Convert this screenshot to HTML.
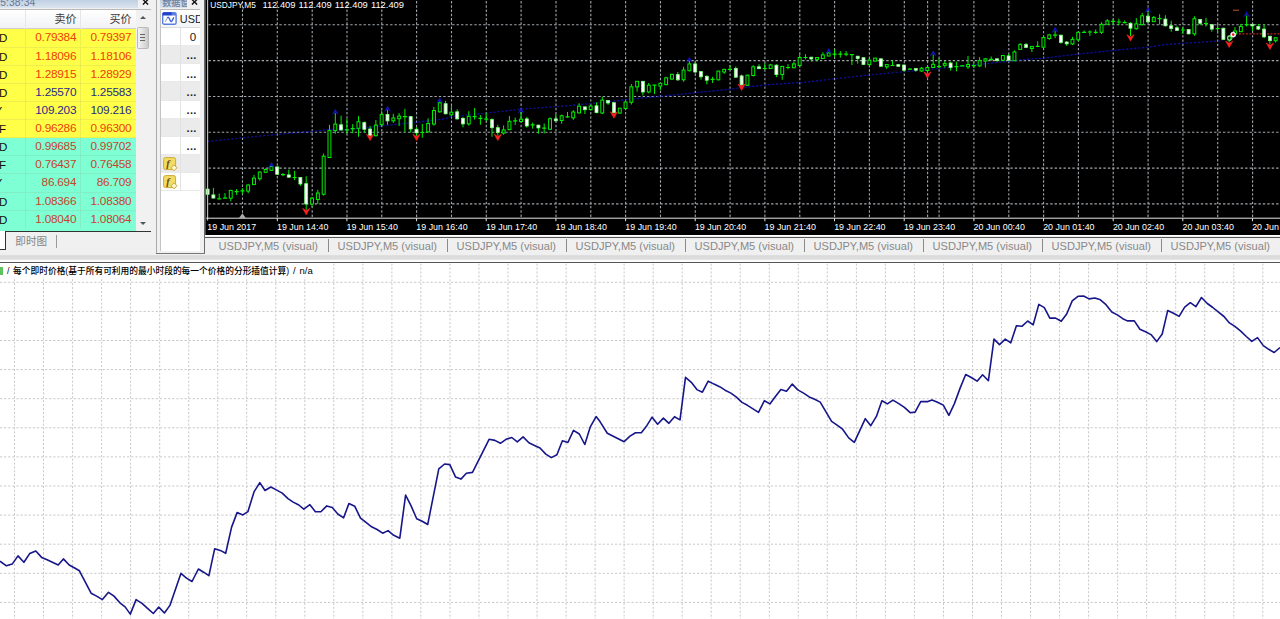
<!DOCTYPE html>
<html><head><meta charset="utf-8"><title>MT4</title>
<style>
html,body{margin:0;padding:0}
body{width:1280px;height:619px;overflow:hidden;position:relative;background:#fff;font-family:"Liberation Sans","Noto Sans CJK SC",sans-serif}
svg{position:absolute;display:block}
.ax{font-family:"Liberation Sans",sans-serif;font-size:8.9px;fill:#fff;white-space:pre}
.abs{position:absolute}
/* left area */
#left{position:absolute;left:0;top:0;width:205.5px;height:254px;background:#f0f0f0}
#mwh{position:absolute;left:0;top:0;width:138px;height:8.2px;background:linear-gradient(#bfcfe3,#dbe4ee);overflow:hidden}
#mwh span{position:absolute;left:-5.6px;top:-3.1px;font-size:10.3px;line-height:12px;color:#68778e;letter-spacing:.1px}
.x{position:absolute;top:-4.6px;font-size:12px;line-height:14px;color:#111;font-family:"DejaVu Sans",sans-serif;font-weight:bold}
#mwt{position:absolute;left:0;top:8.7px;width:150.5px;height:222.3px;background:#f1f1f1;overflow:hidden;border-top:1px solid #b9b9b9;box-sizing:border-box}
#mhd{position:absolute;left:0;top:0;width:135.5px;height:19.6px;background:linear-gradient(#fff,#f1f2f5);border-bottom:1px solid #cfcfcf;box-sizing:border-box}
#mhd span{position:absolute;top:3.4px;font-size:11px;color:#3a3a3a;font-family:"Liberation Sans","Noto Sans CJK SC",sans-serif;line-height:13px}
#mhd i{position:absolute;top:0;width:1px;height:21px;background:#e4e6ea}
.mr{position:absolute;left:0;width:135.5px;height:18.2px;font-size:11.8px;letter-spacing:-.25px;line-height:17.6px;box-sizing:border-box;border-bottom:1px solid rgba(150,150,120,.16)}
.mr.y{background:#ffff48}
.mr.g{background:#7fffd4}
.mr.r{color:#f0400a}
.mr.b{color:#2a2a86}
.mr.t{color:#c8432e}
.mr span{position:absolute;top:0}
.mr .sy{color:#111;font-size:11.6px;letter-spacing:0}
.mr .n1{right:59.3px}
.mr .n2{right:4.1px}
.mr:before,.mr:after{content:"";position:absolute;top:0;width:1px;height:18px;background:rgba(150,150,120,.16)}
.mr:before{left:24.5px}
.mr:after{left:79.5px}
#sb{position:absolute;left:136.5px;top:27.2px;width:12.6px;height:21.6px;border:1px solid #b9b9b9;border-radius:1.5px;background:linear-gradient(90deg,#f4f4f4,#dcdcdc 60%,#c9c9c9);box-sizing:border-box}
#sb i{position:absolute;left:2.6px;width:5.4px;height:1px;background:#666}
.arr{position:absolute;width:0;height:0;border-left:3px solid transparent;border-right:3px solid transparent}
#tabs1{position:absolute;left:0;top:231px;width:150.5px;height:23px}
#tabs1 .ln{position:absolute;left:5px;top:0;width:145.5px;height:1px;background:#333}
#tabs1 .act{position:absolute;left:0;top:0;width:5px;height:18px;background:#fff;border-right:1px solid #333;border-bottom:1px solid #333}
#tabs1 .t{position:absolute;left:15.3px;top:2.6px;font-size:10.6px;line-height:14px;color:#858585;font-family:"Liberation Sans","Noto Sans CJK SC",sans-serif}
#tabs1 .s{position:absolute;left:56.2px;top:3.5px;width:1px;height:13px;background:#9a9a9a}
#vl{position:absolute;left:155.6px;top:0;width:1px;height:254px;background:#a9a9a9}
/* data window */
#dwh{position:absolute;left:160.4px;top:0;width:26.4px;height:8.2px;background:linear-gradient(#bfcfe3,#dbe4ee);overflow:hidden}
#dwh span{position:absolute;left:1.8px;top:-3.4px;font-size:9.1px;line-height:12px;color:#6f7f9a;font-weight:500;font-family:"Liberation Sans","Noto Sans CJK SC",sans-serif;white-space:nowrap}
#dw{position:absolute;left:160.4px;top:8.7px;width:39.8px;height:242.6px;background:#fff;border-left:1px solid #c4c4c4;border-top:1px solid #b9b9b9;box-sizing:border-box;overflow:hidden}
#dw .h{position:absolute;left:0;top:0;width:40px;height:19.3px;background:linear-gradient(#fff,#f3f4f6);border-bottom:1px solid #dcdcdc;box-sizing:border-box}
#dw .h span{position:absolute;left:18.4px;top:3.3px;font-size:10.9px;line-height:14px;color:#222;white-space:nowrap}
.dr{position:absolute;left:0;width:40px;height:18.2px;box-sizing:border-box;border-bottom:1px solid #e9e9e9;background:#fff}
.dr.alt{background:#ebebeb}
.dr:after{content:"";position:absolute;left:19px;top:0;width:1px;height:18px;background:#e3e3e3}
.dv{position:absolute;right:5.2px;top:2.2px;font-size:11.6px;line-height:14px;color:#222}
.dv.dots{font-weight:bold;letter-spacing:.4px;top:2.4px;right:4.6px;font-size:11px}
.fi{left:2px;top:2.2px}
#dwrap{position:absolute;left:0;top:-9.7px}
/* chart tabs */
#ctabs{position:absolute;left:205.3px;top:235px;width:1074.5px;height:18.5px;background:#f0f0f0;border-top:1px solid #fff}
#ctl{position:absolute;left:205.3px;top:237px;width:1074.7px;height:1px;background:#555}
.tb{position:absolute;top:238.9px;font-size:11.08px;line-height:14px;color:#888;width:119px;text-align:center;white-space:nowrap}
.ts{position:absolute;top:239.4px;width:1.2px;height:13px;background:#8a8a8a}
#cl{position:absolute;left:204.2px;top:0;width:1.1px;height:254px;background:#6a6a6a}
#bl{position:absolute;left:155.6px;top:253.2px;width:49.6px;height:1px;background:#777}
/* splitter */
#sp{position:absolute;left:0;top:254px;width:1280px;height:9px;background:linear-gradient(#efefef 0,#efefef 12%,#dadada 18%,#dedede 60%,#fcfcfc 66%,#fcfcfc 88%,#555 90%,#555 100%)}
#hd{position:absolute;left:0;padding:1.2px 5.5px 0.4px 7px;background:#fff;top:263.4px;font-size:8.72px;line-height:12px;color:#000;font-weight:500;word-spacing:1.2px;white-space:pre;font-family:"Liberation Sans","Noto Sans CJK SC",sans-serif}
#gr{position:absolute;left:0;top:266.6px;width:2.8px;height:8px;background:#5fc15f;z-index:3}
</style></head><body>
<div id="left">
 <div id="mwh"><span>15:38:34</span></div>
 <svg width="7" height="6" viewBox="0 0 7 6" style="left:142.0px;top:-1px"><path d="M0.9 0.4L6.1 5.6M6.1 0.4L0.9 5.6" stroke="#111" stroke-width="1.35" fill="none"/></svg>
 <div id="mwt">
  <div id="mhd"><span style="left:54.6px">卖价</span><span style="left:109.4px">买价</span><i style="left:24.5px"></i><i style="left:79.5px"></i></div>
 </div>
 <div class="mr y r" style="top:29.4px"><span class="sy" style="right:128.1px">AUDUSD</span><span class="n1">0.79384</span><span class="n2">0.79397</span></div><div class="mr y r" style="top:47.53px"><span class="sy" style="right:128.1px">EURUSD</span><span class="n1">1.18096</span><span class="n2">1.18106</span></div><div class="mr y r" style="top:65.66px"><span class="sy" style="right:128.1px">GBPUSD</span><span class="n1">1.28915</span><span class="n2">1.28929</span></div><div class="mr y b" style="top:83.79px"><span class="sy" style="right:128.1px">USDCAD</span><span class="n1">1.25570</span><span class="n2">1.25583</span></div><div class="mr y b" style="top:101.92px"><span class="sy" style="right:133.2px">USDJPY</span><span class="n1">109.203</span><span class="n2">109.216</span></div><div class="mr y r" style="top:120.05px"><span class="sy" style="right:129.5px">USDCHF</span><span class="n1">0.96286</span><span class="n2">0.96300</span></div><div class="mr g t" style="top:138.18px"><span class="sy" style="right:128.1px">AUDCAD</span><span class="n1">0.99685</span><span class="n2">0.99702</span></div><div class="mr g t" style="top:156.31px"><span class="sy" style="right:129.5px">AUDCHF</span><span class="n1">0.76437</span><span class="n2">0.76458</span></div><div class="mr g t" style="top:174.44px"><span class="sy" style="right:133.2px">AUDJPY</span><span class="n1">86.694</span><span class="n2">86.709</span></div><div class="mr g t" style="top:192.57px"><span class="sy" style="right:128.1px">AUDNZD</span><span class="n1">1.08366</span><span class="n2">1.08380</span></div><div class="mr g t" style="top:210.7px"><span class="sy" style="right:128.1px">AUDSGD</span><span class="n1">1.08040</span><span class="n2">1.08064</span></div>
 <div class="abs" style="left:0;top:228px;width:135.5px;height:3px;background:#7fffd4"></div>
 <div class="arr" style="left:140px;top:15.6px;border-bottom:3.4px solid #555"></div>
 <div class="arr" style="left:139.6px;top:221.6px;border-top:3.4px solid #555"></div>
 <div id="sb"><i style="top:6.3px"></i><i style="top:9.2px"></i><i style="top:12.1px"></i></div>
 <div id="tabs1"><div class="ln"></div><div class="act"></div><span class="t">即时图</span><i class="s"></i></div>
 <div id="vl"></div>
 <div id="dwh"><span>数据窗口</span></div>
 <svg width="7" height="6" viewBox="0 0 7 6" style="left:190.9px;top:-1px"><path d="M0.9 0.4L6.1 5.6M6.1 0.4L0.9 5.6" stroke="#111" stroke-width="1.35" fill="none"/></svg>
 <div id="dw"><div id="dwrap">
  <div class="h" style="top:8.7px"><svg width="16" height="14" viewBox="0 0 16 14" style="left:0.9px;top:3px"><rect x="0.7" y="0.7" width="13.4" height="11.6" rx="1.6" fill="#fff" stroke="#5a7ee0" stroke-width="1.4"/><path d="M0.7 3.4V2.2Q0.7 0.7 2.2 0.7H12.6Q14.1 0.7 14.1 2.2V3.4Z" fill="#5a7ee0"/><path d="M0.4 3.2V2Q0.4 0.2 2.2 0.2H9.6V3.2Z" fill="#1f44c8"/><path d="M3.2 9.8L5.6 5.6" fill="none" stroke="#a9b6d4" stroke-width="1.3"/><path d="M5.4 5.9Q6.4 4.6 7.2 6.2L8.4 9Q9.2 10.4 10 8.8L11.9 5.4" fill="none" stroke="#3a62d6" stroke-width="1.4"/></svg><span>USDJPY,M5</span></div>
  <div class="dr" style="top:28.0px"><span class="dv">0</span></div><div class="dr alt" style="top:46.1px"><span class="dv dots">...</span></div><div class="dr" style="top:64.3px"><span class="dv dots">...</span></div><div class="dr alt" style="top:82.4px"><span class="dv dots">...</span></div><div class="dr" style="top:100.6px"><span class="dv dots">...</span></div><div class="dr alt" style="top:118.8px"><span class="dv dots">...</span></div><div class="dr" style="top:136.9px"><span class="dv dots">...</span></div><div class="dr alt" style="top:155.0px"><svg class="fi" width="15" height="14" viewBox="0 0 15 14"><rect x="0.6" y="0.6" width="12" height="12" rx="2" fill="#f3dc63" stroke="#c9a93a" stroke-width="1"/><text x="3.2" y="10" font-family="Liberation Serif, serif" font-style="italic" font-weight="bold" font-size="10.5" fill="#6b4a12">f</text><path d="M11 7.8L14 10.8L11 13.8L8 10.8Z" fill="#fff7c8" stroke="#c9a93a" stroke-width="1"/></svg></div><div class="dr" style="top:173.2px"><svg class="fi" width="15" height="14" viewBox="0 0 15 14"><rect x="0.6" y="0.6" width="12" height="12" rx="2" fill="#f3dc63" stroke="#c9a93a" stroke-width="1"/><text x="3.2" y="10" font-family="Liberation Serif, serif" font-style="italic" font-weight="bold" font-size="10.5" fill="#6b4a12">f</text><path d="M11 7.8L14 10.8L11 13.8L8 10.8Z" fill="#fff7c8" stroke="#c9a93a" stroke-width="1"/></svg></div>
 </div></div>
 <div id="cl"></div><div id="bl"></div>
</div>
<svg class="chart" width="1075" height="235" viewBox="205 0 1075 235" style="left:205px;top:0"><rect x="205.3" y="0" width="1074.7" height="235" fill="#000"/><path d="M242.5 1V218.2 M277.3 1V218.2 M312.2 1V218.2 M347.0 1V218.2 M381.8 1V218.2 M416.6 1V218.2 M451.5 1V218.2 M486.3 1V218.2 M521.1 1V218.2 M556.0 1V218.2 M590.8 1V218.2 M625.6 1V218.2 M660.5 1V218.2 M695.3 1V218.2 M730.1 1V218.2 M764.9 1V218.2 M799.8 1V218.2 M834.6 1V218.2 M869.4 1V218.2 M904.3 1V218.2 M939.1 1V218.2 M973.9 1V218.2 M1008.8 1V218.2 M1043.6 1V218.2 M1078.4 1V218.2 M1113.2 1V218.2 M1148.1 1V218.2 M1182.9 1V218.2 M1217.7 1V218.2 M1252.6 1V218.2 M927.6 1V218.2" stroke="#a0a6ac" stroke-width="1.1" stroke-dasharray="2.4 1.87" fill="none"/><path d="M208.5 24.8H1280 M208.5 60.6H1280 M208.5 96.5H1280 M208.5 132.3H1280 M208.5 168.1H1280 M208.5 203.9H1280" stroke="#a0a6ac" stroke-width="1.1" stroke-dasharray="2.4 2.03" fill="none"/><polyline points="207.3,141.5 242.2,137.8 277.1,134.4 312.3,131.5 328.0,129.5 347.3,129.9 381.8,126.0 416.7,122.2 445.0,118.9 451.4,116.6 486.7,113.1 521.2,109.2 565.0,106.0 590.5,103.6 625.4,99.8 660.6,96.3 685.0,93.9 695.3,92.7 730.2,89.2 765.1,84.9 805.0,82.3 834.4,78.8 869.3,74.9 904.5,71.7 922.8,70.1 953.8,66.9 992.5,63.0 1031.3,58.8 1043.7,58.4 1044.2,58.1 1078.6,54.0 1113.4,50.4 1148.3,47.2 1165.0,44.6 1183.0,43.3 1217.8,41.1 1222.4,40.6" stroke="#1212c4" stroke-width="1.35" stroke-dasharray="2.3 1.7" fill="none" opacity="0.75"/><path d="M1239 33.9H1280" stroke="#e03020" stroke-width="1" stroke-dasharray="2 1.5" fill="none"/><path d="M1233 10.2H1239" stroke="#c05028" stroke-width="1" fill="none"/><path d="M207.6 189.1V194.3 M213.4 187.8V198.2 M219.2 193.6V198.8 M225.0 193.0V198.2 M230.8 189.8V201.4 M236.6 189.1V194.9 M242.4 188.1V194.3 M248.2 184.3V193.2 M254.0 174.9V185.0 M259.8 171.4V180.7 M265.6 168.4V172.6 M271.4 166.2V170.6 M277.2 166.9V174.6 M283.0 173.0V176.2 M288.8 169.7V177.5 M294.6 170.8V180.1 M300.4 177.2V185.9 M306.2 176.2V209.8 M312.0 196.9V207.2 M317.8 189.8V204.0 M323.6 153.6V195.6 M329.5 124.8V157.7 M335.3 113.1V133.8 M341.1 115.7V130.6 M346.9 118.9V133.8 M352.7 124.1V133.2 M358.5 116.1V136.8 M364.3 121.5V132.5 M370.1 126.0V135.7 M375.9 120.0V136.4 M381.7 110.5V126.7 M387.5 109.9V124.8 M393.3 113.8V122.8 M399.1 113.1V126.0 M404.9 108.9V131.9 M410.7 116.1V132.5 M416.5 127.3V135.7 M422.3 123.8V137.7 M428.1 118.3V132.5 M433.9 107.0V125.7 M439.8 101.5V112.7 M445.6 100.8V114.4 M451.4 105.4V116.6 M457.2 109.2V119.6 M463.0 117.0V127.3 M468.8 111.2V125.7 M474.6 108.0V119.6 M480.4 115.1V124.8 M486.2 112.5V121.5 M492.0 118.3V136.8 M497.8 124.8V135.7 M503.6 125.4V134.7 M509.4 116.1V130.3 M515.2 117.6V124.8 M521.0 111.8V121.8 M526.8 117.0V127.7 M532.6 122.6V128.6 M538.4 124.8V133.8 M544.2 123.5V133.4 M550.0 117.4V129.9 M555.8 114.0V121.5 M561.7 114.6V123.7 M567.5 112.0V117.8 M573.3 110.1V119.8 M579.1 103.2V113.6 M584.9 106.6V114.0 M590.7 104.9V110.7 M596.5 102.3V113.3 M602.3 96.8V114.0 M608.1 100.1V104.9 M613.9 102.3V113.3 M619.7 107.9V113.6 M625.5 101.0V109.4 M631.3 83.9V104.5 M637.1 81.0V91.6 M642.9 81.0V95.5 M648.7 83.0V93.3 M654.5 84.9V93.9 M660.3 83.0V90.1 M666.1 76.9V85.2 M672.0 73.9V79.7 M677.8 72.0V81.0 M683.6 66.8V81.7 M689.4 61.0V71.4 M695.2 61.7V73.3 M701.0 71.1V79.8 M706.8 75.2V84.3 M712.6 76.8V83.0 M718.4 70.7V80.4 M724.2 68.8V73.9 M730.0 65.2V70.1 M735.8 66.4V77.8 M741.6 74.6V85.6 M747.4 74.6V85.8 M753.2 65.2V76.5 M759.0 64.2V69.0 M764.8 63.0V69.8 M770.6 63.9V68.8 M776.4 64.2V77.2 M782.2 65.9V79.8 M788.0 64.2V69.4 M793.9 61.7V68.1 M799.7 53.9V67.2 M805.5 54.2V59.4 M811.3 56.8V61.6 M817.1 57.2V61.6 M822.9 52.3V58.8 M828.7 52.3V56.2 M834.5 49.5V56.8 M840.3 51.0V57.7 M846.1 51.0V56.2 M851.9 54.2V65.0 M857.7 55.9V63.7 M863.5 57.5V65.0 M869.3 58.1V65.0 M875.1 57.9V61.6 M880.9 58.5V66.8 M886.7 64.2V68.8 M892.5 60.7V65.9 M898.3 64.3V66.5 M904.1 64.6V71.7 M910.0 68.5V70.1 M915.8 68.2V71.7 M921.6 66.9V71.8 M927.4 66.9V73.3 M933.2 54.6V67.9 M939.0 58.5V68.2 M944.8 61.0V67.5 M950.6 61.7V70.7 M956.4 61.7V71.4 M962.2 65.3V66.3 M968.0 55.9V68.8 M973.8 62.3V68.2 M979.6 57.2V66.9 M985.4 58.1V67.5 M991.2 56.5V61.0 M997.0 58.5V61.7 M1002.8 55.2V60.7 M1008.6 53.9V60.7 M1014.4 50.3V61.0 M1020.2 43.0V49.8 M1026.1 43.0V47.7 M1031.9 46.2V52.0 M1037.7 41.4V47.2 M1043.5 35.9V47.8 M1049.3 33.9V39.8 M1055.1 31.0V38.1 M1060.9 34.6V43.7 M1066.7 41.1V45.9 M1072.5 36.8V45.0 M1078.3 31.7V41.4 M1084.1 30.4V33.0 M1089.9 30.4V35.9 M1095.7 29.5V33.9 M1101.5 22.2V33.9 M1107.3 19.1V24.8 M1113.1 19.1V24.8 M1118.9 18.7V25.2 M1124.7 20.4V23.3 M1130.5 22.2V36.2 M1136.3 18.1V29.7 M1142.2 12.9V25.6 M1148.0 11.0V23.0 M1153.8 16.2V22.0 M1159.6 14.2V24.6 M1165.4 15.2V26.5 M1171.2 20.7V31.7 M1177.0 25.8V31.0 M1182.8 27.1V33.9 M1188.6 29.1V34.2 M1194.4 16.2V35.9 M1200.2 19.1V25.2 M1206.0 17.8V26.5 M1211.8 24.3V31.7 M1217.6 23.3V33.6 M1223.4 27.8V39.8 M1229.2 35.2V42.6 M1235.0 27.1V34.6 M1240.8 23.9V32.0 M1246.6 15.5V26.5 M1252.4 24.3V31.0 M1258.3 23.9V30.0 M1264.1 24.6V38.1 M1269.9 35.9V44.6 M1275.7 37.5V42.6" stroke="#00f000" stroke-width="1" fill="none"/><g fill="#000" stroke="#00f000" stroke-width="1"><rect x="229.3" y="190.4" width="2.9" height="7.8"/><rect x="246.7" y="185.0" width="2.9" height="6.1"/><rect x="252.5" y="178.1" width="2.9" height="6.5"/><rect x="258.3" y="172.0" width="2.9" height="6.7"/><rect x="264.2" y="169.5" width="2.9" height="2.8"/><rect x="270.0" y="166.5" width="2.9" height="3.9"/><rect x="310.6" y="198.2" width="2.9" height="5.8"/><rect x="316.4" y="193.0" width="2.9" height="6.5"/><rect x="322.2" y="156.2" width="2.9" height="38.1"/><rect x="328.0" y="130.6" width="2.9" height="26.9"/><rect x="333.8" y="124.1" width="2.9" height="6.5"/><rect x="357.0" y="121.8" width="2.9" height="6.5"/><rect x="374.4" y="125.1" width="2.9" height="10.6"/><rect x="380.2" y="114.4" width="2.9" height="10.3"/><rect x="391.9" y="118.0" width="2.9" height="2.8"/><rect x="397.7" y="116.1" width="2.9" height="2.6"/><rect x="426.7" y="123.5" width="2.9" height="8.4"/><rect x="432.5" y="110.5" width="2.9" height="13.6"/><rect x="438.3" y="102.8" width="2.9" height="9.0"/><rect x="449.9" y="112.2" width="2.9" height="2.6"/><rect x="467.3" y="116.4" width="2.9" height="7.5"/><rect x="502.2" y="129.9" width="2.9" height="3.2"/><rect x="508.0" y="121.3" width="2.9" height="8.3"/><rect x="519.6" y="119.2" width="2.9" height="2.3"/><rect x="548.6" y="118.7" width="2.9" height="10.6"/><rect x="560.2" y="115.7" width="2.9" height="4.8"/><rect x="571.8" y="112.0" width="2.9" height="5.8"/><rect x="577.6" y="106.2" width="2.9" height="6.7"/><rect x="589.2" y="106.0" width="2.9" height="3.5"/><rect x="600.8" y="100.1" width="2.9" height="12.9"/><rect x="618.3" y="108.2" width="2.9" height="4.9"/><rect x="624.1" y="102.0" width="2.9" height="6.5"/><rect x="629.9" y="86.8" width="2.9" height="15.5"/><rect x="635.7" y="81.3" width="2.9" height="5.6"/><rect x="647.3" y="85.2" width="2.9" height="6.8"/><rect x="658.9" y="83.3" width="2.9" height="2.8"/><rect x="664.7" y="77.8" width="2.9" height="6.8"/><rect x="670.5" y="74.3" width="2.9" height="4.8"/><rect x="682.1" y="70.1" width="2.9" height="9.7"/><rect x="687.9" y="63.9" width="2.9" height="6.8"/><rect x="716.9" y="71.1" width="2.9" height="8.7"/><rect x="722.7" y="69.4" width="2.9" height="2.6"/><rect x="746.0" y="75.2" width="2.9" height="10.1"/><rect x="751.8" y="66.8" width="2.9" height="8.7"/><rect x="769.2" y="64.9" width="2.9" height="3.6"/><rect x="780.8" y="66.4" width="2.9" height="8.1"/><rect x="792.4" y="63.9" width="2.9" height="3.9"/><rect x="798.2" y="57.5" width="2.9" height="8.0"/><rect x="815.6" y="57.5" width="2.9" height="1.9"/><rect x="821.4" y="54.9" width="2.9" height="3.6"/><rect x="827.2" y="53.0" width="2.9" height="3.0"/><rect x="867.9" y="60.1" width="2.9" height="4.5"/><rect x="873.7" y="58.1" width="2.9" height="3.0"/><rect x="885.3" y="64.6" width="2.9" height="2.2"/><rect x="920.1" y="68.2" width="2.9" height="2.8"/><rect x="925.9" y="67.5" width="2.9" height="3.0"/><rect x="931.7" y="64.3" width="2.9" height="3.2"/><rect x="943.3" y="63.6" width="2.9" height="1.7"/><rect x="966.6" y="64.5" width="2.9" height="2.3"/><rect x="978.2" y="60.7" width="2.9" height="5.2"/><rect x="984.0" y="58.8" width="2.9" height="2.2"/><rect x="1001.4" y="55.5" width="2.9" height="4.7"/><rect x="1013.0" y="52.0" width="2.9" height="8.7"/><rect x="1018.8" y="44.6" width="2.9" height="4.8"/><rect x="1030.4" y="46.4" width="2.9" height="2.1"/><rect x="1042.0" y="37.5" width="2.9" height="9.7"/><rect x="1047.8" y="34.9" width="2.9" height="3.6"/><rect x="1071.0" y="39.4" width="2.9" height="4.5"/><rect x="1076.8" y="32.3" width="2.9" height="7.5"/><rect x="1100.1" y="24.3" width="2.9" height="8.0"/><rect x="1105.9" y="20.9" width="2.9" height="3.4"/><rect x="1134.9" y="23.9" width="2.9" height="4.8"/><rect x="1140.7" y="15.8" width="2.9" height="8.8"/><rect x="1152.3" y="17.4" width="2.9" height="4.3"/><rect x="1192.9" y="18.7" width="2.9" height="15.1"/><rect x="1227.8" y="36.2" width="2.9" height="3.9"/><rect x="1233.6" y="31.0" width="2.9" height="2.8"/><rect x="1239.4" y="26.5" width="2.9" height="5.2"/><rect x="1274.2" y="37.7" width="2.9" height="3.0"/></g><g fill="#fff" stroke="#7dff7d" stroke-width="0.8"><rect x="206.1" y="189.1" width="3" height="5.2"/><rect x="211.9" y="194.9" width="3" height="3.2"/><rect x="275.7" y="166.9" width="3" height="7.4"/><rect x="287.3" y="174.9" width="3" height="2.3"/><rect x="298.9" y="177.5" width="3" height="6.5"/><rect x="304.7" y="183.7" width="3" height="20.3"/><rect x="339.6" y="124.8" width="3" height="5.2"/><rect x="362.8" y="122.6" width="3" height="6.7"/><rect x="368.6" y="129.0" width="3" height="6.7"/><rect x="386.0" y="114.4" width="3" height="6.5"/><rect x="409.2" y="116.6" width="3" height="12.4"/><rect x="415.0" y="129.3" width="3" height="3.6"/><rect x="444.1" y="103.7" width="3" height="10.1"/><rect x="455.7" y="111.8" width="3" height="7.1"/><rect x="461.5" y="118.3" width="3" height="5.6"/><rect x="490.5" y="119.6" width="3" height="8.1"/><rect x="496.3" y="127.7" width="3" height="4.8"/><rect x="525.3" y="118.9" width="3" height="7.1"/><rect x="536.9" y="125.1" width="3" height="2.8"/><rect x="554.3" y="118.9" width="3" height="1.9"/><rect x="583.4" y="106.9" width="3" height="2.8"/><rect x="595.0" y="105.8" width="3" height="6.8"/><rect x="606.6" y="100.4" width="3" height="2.6"/><rect x="612.4" y="102.7" width="3" height="10.0"/><rect x="641.4" y="81.3" width="3" height="10.7"/><rect x="676.3" y="74.6" width="3" height="5.2"/><rect x="693.7" y="63.9" width="3" height="8.1"/><rect x="699.5" y="71.6" width="3" height="5.2"/><rect x="705.3" y="76.3" width="3" height="3.9"/><rect x="734.3" y="68.5" width="3" height="8.7"/><rect x="740.1" y="75.9" width="3" height="9.0"/><rect x="757.5" y="66.8" width="3" height="1.9"/><rect x="774.9" y="65.2" width="3" height="9.4"/><rect x="809.8" y="57.2" width="3" height="1.8"/><rect x="856.2" y="56.2" width="3" height="2.3"/><rect x="862.0" y="57.7" width="3" height="6.8"/><rect x="879.4" y="58.8" width="3" height="7.5"/><rect x="896.8" y="64.6" width="3" height="1.7"/><rect x="902.6" y="65.0" width="3" height="5.2"/><rect x="914.3" y="68.5" width="3" height="1.7"/><rect x="949.1" y="63.0" width="3" height="4.5"/><rect x="995.5" y="58.8" width="3" height="1.8"/><rect x="1007.1" y="55.9" width="3" height="4.3"/><rect x="1024.6" y="44.6" width="3" height="2.8"/><rect x="1059.4" y="35.2" width="3" height="7.2"/><rect x="1065.2" y="42.0" width="3" height="1.9"/><rect x="1129.0" y="23.3" width="3" height="4.9"/><rect x="1146.5" y="16.2" width="3" height="5.6"/><rect x="1163.9" y="19.1" width="3" height="6.7"/><rect x="1169.7" y="25.8" width="3" height="2.8"/><rect x="1175.5" y="27.8" width="3" height="2.6"/><rect x="1187.1" y="29.5" width="3" height="4.4"/><rect x="1198.7" y="19.4" width="3" height="3.9"/><rect x="1210.3" y="24.6" width="3" height="4.5"/><rect x="1221.9" y="28.2" width="3" height="11.2"/><rect x="1250.9" y="24.3" width="3" height="1.6"/><rect x="1256.8" y="26.5" width="3" height="2.6"/><rect x="1262.6" y="29.1" width="3" height="7.8"/><rect x="1268.4" y="36.2" width="3" height="4.5"/></g><path d="M217.2 198.8H221.2 M223.0 198.2H227.0 M234.6 191.7H238.6 M240.4 190.8H244.4 M281.0 174.6H285.0 M292.6 177.5H296.6 M344.9 129.9H348.9 M350.7 128.6H354.7 M402.9 116.6H406.9 M420.3 132.5H424.3 M472.6 116.7H476.6 M478.4 118.3H482.4 M484.2 119.2H488.2 M513.2 120.9H517.2 M530.6 124.8H534.6 M542.2 128.2H546.2 M565.5 116.9H569.5 M652.5 85.2H656.5 M710.6 79.4H714.6 M728.0 69.4H732.0 M762.8 68.5H766.8 M786.0 67.5H790.0 M803.5 57.5H807.5 M832.5 54.2H836.5 M838.3 54.2H842.3 M844.1 54.2H848.1 M849.9 54.6H853.9 M890.5 65.5H894.5 M908.0 69.1H912.0 M937.0 66.6H941.0 M954.4 66.6H958.4 M960.2 65.8H964.2 M971.8 65.6H975.8 M989.2 59.4H993.2 M1035.7 46.3H1039.7 M1053.1 35.2H1057.1 M1082.1 32.3H1086.1 M1087.9 32.0H1091.9 M1093.7 32.3H1097.7 M1111.1 21.3H1115.1 M1116.9 22.0H1120.9 M1122.7 22.6H1126.7 M1157.6 18.7H1161.6 M1180.8 30.0H1184.8 M1204.0 23.5H1208.0 M1215.6 28.7H1219.6 M1244.6 24.6H1248.6" stroke="#00f000" stroke-width="1.2" fill="none"/><path d="M271.4 162.1L274.5 167.7L271.4 165.7L268.3 167.7Z M335.3 109.0L338.4 114.6L335.3 112.6L332.2 114.6Z M387.5 105.8L390.6 111.4L387.5 109.4L384.4 111.4Z M439.8 97.4L442.9 103.0L439.8 101.0L436.6 103.0Z M521.0 107.7L524.1 113.3L521.0 111.3L517.9 113.3Z M689.4 56.9L692.5 62.5L689.4 60.5L686.3 62.5Z M828.7 48.2L831.8 53.8L828.7 51.8L825.6 53.8Z M933.2 50.5L936.3 56.1L933.2 54.1L930.1 56.1Z M1055.1 26.9L1058.2 32.5L1055.1 30.5L1052.0 32.5Z M1148.0 6.9L1151.1 12.5L1148.0 10.5L1144.9 12.5Z M1246.6 11.4L1249.7 17.0L1246.6 15.0L1243.5 17.0Z" fill="#1818d8" stroke="#1818d8" stroke-width="0.3" opacity="0.85"/><path d="M306.2 214.7L309.8 208.3L306.2 210.5L302.6 208.3Z M370.1 140.6L373.7 134.2L370.1 136.4L366.5 134.2Z M416.5 140.6L420.1 134.2L416.5 136.4L412.9 134.2Z M497.8 140.6L501.4 134.2L497.8 136.4L494.2 134.2Z M613.9 118.2L617.5 111.8L613.9 114.0L610.3 111.8Z M741.6 90.5L745.2 84.1L741.6 86.3L738.0 84.1Z M927.4 78.2L931.0 71.8L927.4 74.0L923.8 71.8Z M1130.5 41.1L1134.1 34.7L1130.5 36.9L1126.9 34.7Z M1229.2 47.5L1232.8 41.1L1229.2 43.3L1225.6 41.1Z M1269.9 49.5L1273.5 43.1L1269.9 45.3L1266.3 43.1Z" fill="#ff2020" stroke="#ff2020" stroke-width="0.6"/><circle cx="1233.2" cy="34.6" r="2.6" fill="#fff" stroke="#ddd" stroke-width="0.6"/><circle cx="1233.2" cy="34.6" r="1.3" fill="#e02020"/><circle cx="1229.8" cy="38" r="2.2" fill="none" stroke="#e8e8e8" stroke-width="0.8"/><path d="M207.6 0V220.6" stroke="#c4c4c4" stroke-width="1.1" fill="none"/><path d="M206.2 218.2H1280" stroke="#e6e6e6" stroke-width="1" fill="none"/><text x="207.3" y="229.9" class="ax">19 Jun 2017</text><text x="277.0" y="229.9" class="ax">19 Jun 14:40</text><text x="346.6" y="229.9" class="ax">19 Jun 15:40</text><text x="416.3" y="229.9" class="ax">19 Jun 16:40</text><text x="485.9" y="229.9" class="ax">19 Jun 17:40</text><text x="555.6" y="229.9" class="ax">19 Jun 18:40</text><text x="625.3" y="229.9" class="ax">19 Jun 19:40</text><text x="694.9" y="229.9" class="ax">19 Jun 20:40</text><text x="764.6" y="229.9" class="ax">19 Jun 21:40</text><text x="834.2" y="229.9" class="ax">19 Jun 22:40</text><text x="903.9" y="229.9" class="ax">19 Jun 23:40</text><text x="973.6" y="229.9" class="ax">20 Jun 00:40</text><text x="1043.2" y="229.9" class="ax">20 Jun 01:40</text><text x="1112.9" y="229.9" class="ax">20 Jun 02:40</text><text x="1182.5" y="229.9" class="ax">20 Jun 03:40</text><text x="1252.2" y="229.9" class="ax">20 Jun 04:40</text><path d="M277.3 218.2v3 M346.9 218.2v3 M416.6 218.2v3 M486.2 218.2v3 M555.9 218.2v3 M625.6 218.2v3 M695.2 218.2v3 M764.9 218.2v3 M834.5 218.2v3 M904.2 218.2v3 M973.9 218.2v3 M1043.5 218.2v3 M1113.2 218.2v3 M1182.8 218.2v3 M1252.5 218.2v3" stroke="#e6e6e6" stroke-width="1" fill="none"/><path d="M242.4 213.2L246 218.2H238.8Z" fill="#a8a8a8"/><text x="210.2" y="8.1" class="ax" textLength="45.6" lengthAdjust="spacingAndGlyphs">USDJPY,M5</text><text x="262.4" y="8.1" class="ax" style="font-size:9.35px">112.409</text><text x="298.5" y="8.1" class="ax" style="font-size:9.35px">112.409</text><text x="334.7" y="8.1" class="ax" style="font-size:9.35px">112.409</text><text x="370.9" y="8.1" class="ax" style="font-size:9.35px">112.409</text></svg>
<div id="ctabs"></div><div id="ctl"></div>
<span class="tb" style="left:208.8px">USDJPY,M5 (visual)</span><i class="ts" style="left:327.7px"></i><span class="tb" style="left:327.8px">USDJPY,M5 (visual)</span><i class="ts" style="left:446.7px"></i><span class="tb" style="left:446.8px">USDJPY,M5 (visual)</span><i class="ts" style="left:565.7px"></i><span class="tb" style="left:565.8px">USDJPY,M5 (visual)</span><i class="ts" style="left:684.7px"></i><span class="tb" style="left:684.8px">USDJPY,M5 (visual)</span><i class="ts" style="left:803.7px"></i><span class="tb" style="left:803.8px">USDJPY,M5 (visual)</span><i class="ts" style="left:922.7px"></i><span class="tb" style="left:922.8px">USDJPY,M5 (visual)</span><i class="ts" style="left:1041.7px"></i><span class="tb" style="left:1041.8px">USDJPY,M5 (visual)</span><i class="ts" style="left:1160.7px"></i><span class="tb" style="left:1160.8px">USDJPY,M5 (visual)</span>
<div id="sp"></div>
<svg class="bot" width="1280" height="356" viewBox="0 263 1280 356" style="left:0;top:263px"><path d="M14.5 263.6V619 M43.5 263.6V619 M72.6 263.6V619 M101.6 263.6V619 M130.6 263.6V619 M159.7 263.6V619 M188.7 263.6V619 M217.7 263.6V619 M246.7 263.6V619 M275.8 263.6V619 M304.8 263.6V619 M333.8 263.6V619 M362.9 263.6V619 M391.9 263.6V619 M420.9 263.6V619 M450.0 263.6V619 M479.0 263.6V619 M508.0 263.6V619 M537.0 263.6V619 M566.1 263.6V619 M595.1 263.6V619 M624.1 263.6V619 M653.2 263.6V619 M682.2 263.6V619 M711.2 263.6V619 M740.2 263.6V619 M769.3 263.6V619 M798.3 263.6V619 M827.3 263.6V619 M856.4 263.6V619 M885.4 263.6V619 M914.4 263.6V619 M943.5 263.6V619 M972.5 263.6V619 M1001.5 263.6V619 M1030.6 263.6V619 M1059.6 263.6V619 M1088.6 263.6V619 M1117.6 263.6V619 M1146.7 263.6V619 M1175.7 263.6V619 M1204.7 263.6V619 M1233.8 263.6V619 M1262.8 263.6V619" stroke="#c8c8c8" stroke-width="1" stroke-dasharray="2.1 1.8" fill="none"/><path d="M0 282.3H1280 M0 311.4H1280 M0 340.5H1280 M0 369.6H1280 M0 398.7H1280 M0 427.8H1280 M0 456.9H1280 M0 486.0H1280 M0 515.1H1280 M0 544.2H1280 M0 573.3H1280 M0 602.4H1280" stroke="#c8c8c8" stroke-width="1" stroke-dasharray="2.2 1.9" fill="none"/><polyline points="0.0,561.2 6.4,565.8 12.2,564.1 18.0,555.9 23.9,562.3 29.7,553.6 35.8,551.0 41.6,557.4 47.1,559.7 58.2,565.0 63.4,558.9 69.2,565.0 75.1,568.2 79.4,570.8 91.1,593.2 96.6,596.1 102.4,599.6 108.5,592.3 114.0,596.1 119.9,602.8 125.1,606.9 130.3,614.1 136.1,599.6 142.0,603.4 147.8,608.6 153.3,613.5 158.8,607.1 164.4,613.0 169.9,605.4 180.9,573.4 186.5,578.1 192.0,581.5 198.4,569.0 203.6,572.2 208.9,575.7 214.7,548.7 220.2,550.4 225.7,553.3 231.6,527.1 237.1,512.6 242.9,514.9 247.9,511.7 254.0,491.9 259.8,482.6 265.0,490.5 270.8,487.0 276.4,489.9 282.2,493.1 288.0,498.6 293.2,502.1 298.8,505.0 303.8,509.1 309.9,504.7 315.4,511.7 320.9,511.7 326.8,505.9 332.3,507.6 337.8,514.0 343.6,517.8 348.9,503.6 354.7,506.2 360.5,518.1 365.7,522.2 371.6,526.8 377.1,529.5 382.6,533.2 388.1,530.6 393.7,535.3 399.8,538.2 405.6,495.1 411.1,505.9 416.7,518.7 422.2,521.3 427.7,524.5 438.8,468.9 444.6,464.0 449.8,464.6 455.6,477.1 460.9,479.1 466.4,473.3 472.5,472.4 489.1,439.3 494.9,440.4 500.4,443.3 506.0,439.3 511.8,437.5 517.3,441.9 523.1,436.9 528.9,442.8 534.5,445.4 540.0,448.0 545.8,454.1 551.3,457.6 556.9,454.7 562.4,440.7 567.9,442.5 573.5,430.3 579.3,434.0 584.8,444.5 590.3,426.8 596.1,416.6 600.0,421.6 607.3,433.2 624.1,441.7 630.0,436.1 635.5,432.7 641.3,432.7 646.8,425.7 652.1,417.2 657.6,424.2 663.4,418.1 668.9,423.3 674.5,416.7 680.0,419.9 685.5,377.4 691.3,382.3 696.9,389.6 702.4,392.2 708.2,381.2 714.0,384.1 719.6,386.7 725.1,390.2 730.9,393.1 736.4,397.2 742.0,402.4 747.5,405.3 758.5,412.3 764.4,400.7 769.9,403.9 775.4,396.6 780.9,389.6 786.5,391.3 792.3,384.1 797.8,389.9 803.6,393.1 809.2,396.9 814.7,399.2 820.2,402.1 831.6,421.3 837.1,425.1 842.6,429.2 848.7,437.9 854.3,442.3 865.3,418.7 870.8,425.7 876.4,416.4 881.9,400.7 887.4,403.9 892.9,400.1 898.8,403.6 904.4,407.4 910.2,412.7 915.1,412.1 920.7,401.6 927.9,401.6 932.0,399.9 937.5,402.2 943.3,405.1 948.9,415.3 954.4,403.6 960.2,387.9 965.7,374.5 971.3,377.5 977.1,381.2 982.6,374.8 988.4,380.7 994.0,339.1 999.5,344.6 1005.3,339.1 1010.8,342.8 1016.4,325.7 1021.9,326.3 1027.7,321.0 1033.2,324.8 1038.8,304.4 1044.3,307.6 1049.8,318.1 1055.6,318.1 1061.2,321.3 1066.7,314.0 1072.2,300.9 1078.0,296.3 1083.6,296.0 1089.1,298.9 1094.9,298.0 1100.4,299.8 1106.0,304.7 1111.8,312.0 1117.3,314.9 1122.8,318.7 1127.3,320.9 1134.3,320.9 1139.9,329.3 1145.5,331.8 1151.0,334.6 1156.7,341.6 1162.2,334.0 1167.7,310.6 1173.5,313.3 1179.1,316.4 1184.7,307.1 1190.3,302.7 1195.9,306.7 1201.5,297.5 1207.3,303.5 1212.8,307.5 1218.5,312.2 1224.0,316.5 1229.4,322.9 1234.9,326.4 1240.7,331.2 1246.3,336.5 1251.8,341.4 1257.5,337.6 1263.3,345.6 1268.7,349.3 1274.2,352.5 1280.0,347.5" stroke="#16168a" stroke-width="1.6" fill="none" stroke-linejoin="round"/></svg>
<div id="gr"></div>
<div id="hd">/ 每个即时价格(基于所有可利用的最小时段的每一个价格的分形插值计算)<span style="font-size:9.5px"> / n/a</span></div>
</body></html>
